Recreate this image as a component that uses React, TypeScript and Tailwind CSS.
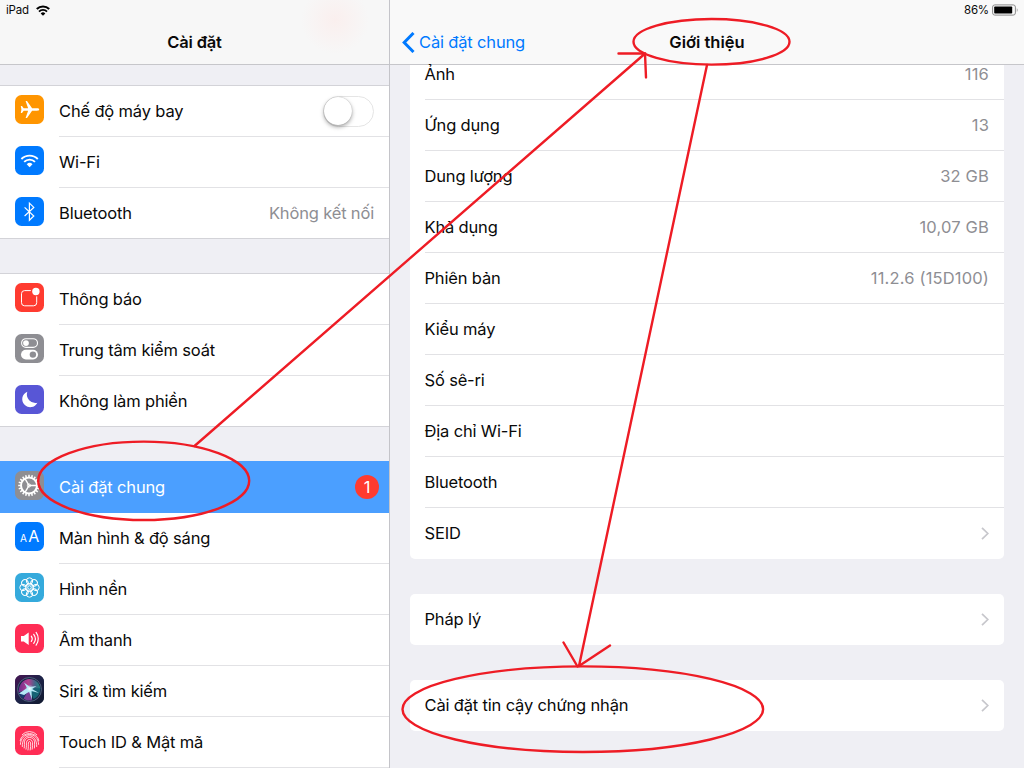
import type { ReactNode } from "react"

const SEPARATOR_CLASS = "border-b border-[#e2e2e5]"
const GROUP_EDGE_CLASS = "border-b border-[#d3d3d8]"

interface SidebarItem {
  id: string
  label: string
  iconClass: string
  icon: ReactNode
  value?: string
  toggle?: boolean
  badge?: number
  active?: boolean
}

interface AboutRow {
  label: string
  value?: string
  link?: boolean
}

const PlaneIcon = () => (
  <svg viewBox="0 0 29 29" className="size-full" fill="#fff">
    <path d="M24.2 14.5c0-.8-.9-1.2-2.100-1.200h-5L12 6h-1.400l2.500 7.300H8.700L7 10.900H5.800l.6 3.600-.6 3.600H7l1.700-2.400h4.400L10.600 23H12l5.100-7.300h5c1.200 0 2.100-.4 2.100-1.200z" />
  </svg>
)

const WifiIcon = () => (
  <svg viewBox="0 0 29 29" className="size-full" fill="none" stroke="#fff">
    <path d="M6.400 13a11.600 11.600 0 0 1 16.400 0" strokeWidth="1.900" />
    <path d="M9.200 15.900a7.600 7.600 0 0 1 10.800 0" strokeWidth="1.900" />
    <path d="M14.600 21.300l-2.900-3a4.100 4.100 0 0 1 5.800 0z" fill="#fff" stroke="none" />
  </svg>
)

const BluetoothIcon = () => (
  <svg viewBox="0 0 29 29" className="size-full" fill="none" stroke="#fff" strokeWidth="1.2">
    <path d="M9.600 10.400l9.200 8.600-4.400 4.300V6.100l4.400 4.300L9.600 19" />
  </svg>
)

const NotificationIcon = () => (
  <svg viewBox="0 0 29 29" className="size-full" fill="none">
    <path
      d="M15.800 7.600H9.600a3.100 3.100 0 0 0-3.100 3.100v9a3.100 3.100 0 0 0 3.100 3.100h9a3.100 3.100 0 0 0 3.100-3.100v-6.300"
      stroke="#fff"
      strokeWidth="1"
    />
    <circle cx="20.900" cy="8.500" r="3.700" fill="#fff" />
  </svg>
)

const ControlCenterIcon = () => (
  <svg viewBox="0 0 29 29" className="size-full" fill="none">
    <rect x="6.600" y="4.700" width="15.900" height="8.700" rx="4.350" stroke="#fff" strokeWidth="1.1" />
    <circle cx="11" cy="9.050" r="2.900" fill="#fff" />
    <rect x="6" y="15.700" width="17" height="9.800" rx="4.900" fill="#fff" />
    <circle cx="17.900" cy="20.600" r="3.200" fill="#8e8e93" />
  </svg>
)

const MoonIcon = () => (
  <svg viewBox="0 0 29 29" className="size-full" fill="#fff">
    <path d="M12.300 6.700a8.600 8.600 0 0 0 10.100 11A8 8 0 1 1 12.300 6.700z" />
  </svg>
)

const GEAR_TEETH = Array.from({ length: 20 }, (_, i) => i * 18)

const GearIcon = () => (
  <svg viewBox="0 0 29 29" className="size-full" fill="none" stroke="#fff">
    <circle cx="14" cy="14.500" r="8" strokeWidth="2" />
    {GEAR_TEETH.map((angle) => (
      <path key={angle} d="M14 3.700v2.400" strokeWidth="1.5" transform={`rotate(${angle} 14 14.500)`} />
    ))}
    {[90, 210, 330].map((angle) => (
      <path key={angle} d="M14 14.500V6.800" strokeWidth="1.4" transform={`rotate(${angle} 14 14.500)`} />
    ))}
    <circle cx="14" cy="14.500" r="1.600" strokeWidth="1" />
  </svg>
)

const DisplayIcon = () => (
  <span className="flex h-full items-baseline justify-center gap-[1.5px] pt-[3px] leading-[23px] text-white">
    <span className="text-[10px]">A</span>
    <span className="text-[16px]">A</span>
  </span>
)

const WallpaperIcon = () => (
  <svg viewBox="0 0 29 29" className="size-full" fill="none" stroke="#fff" strokeWidth="1">
    {[0, 45, 90, 135, 180, 225, 270, 315].map((angle) => (
      <circle key={angle} cx="14.500" cy="8" r="3.200" transform={`rotate(${angle} 14.500 14.500)`} />
    ))}
    <circle cx="14.500" cy="14.500" r="4" />
    <circle cx="14.500" cy="14.500" r="1.800" />
  </svg>
)

const SoundIcon = () => (
  <svg viewBox="0 0 29 29" className="size-full" fill="none" stroke="#fff" strokeLinecap="round">
    <path d="M6 12.100h2.800l4.900-3.500v12.400l-4.900-3.500H6z" fill="#fff" stroke="none" />
    <path d="M16.300 12.200a4.400 4.400 0 0 1 0 5.200" strokeWidth="1.2" />
    <path d="M18.700 10.300a7.400 7.400 0 0 1 0 9" strokeWidth="1.2" />
    <path d="M21.100 8.400a10.600 10.600 0 0 1 0 12.800" strokeWidth="1.2" />
  </svg>
)

const SiriIcon = () => (
  <svg viewBox="0 0 29 29" className="size-full" fill="none">
    <defs>
      <linearGradient id="siri-back" x1="0" y1="0" x2="1" y2="1">
        <stop offset="0" stopColor="#471453" />
        <stop offset=".5" stopColor="#1d2348" />
        <stop offset="1" stopColor="#10192d" />
      </linearGradient>
      <linearGradient id="siri-top" x1="0" y1="0" x2="1" y2="0">
        <stop offset="0" stopColor="#7c2f9a" />
        <stop offset=".45" stopColor="#d0449c" />
        <stop offset=".75" stopColor="#4d6f95" />
        <stop offset="1" stopColor="#1f9a8c" />
      </linearGradient>
      <radialGradient id="siri-glow">
        <stop offset="0" stopColor="#fff" />
        <stop offset="1" stopColor="#8be8f5" stopOpacity="0" />
      </radialGradient>
    </defs>
    <rect width="29" height="29" fill="url(#siri-back)" />
    <circle cx="14.500" cy="14.500" r="12" fill="#172545" stroke="#5c6f8a" strokeWidth=".8" />
    <path d="M3.500 17.500C3.800 9 8.500 4 14.500 4s10.300 4 10.800 9.500L15 13.500z" fill="url(#siri-top)" opacity=".85" />
    <path d="M14.500 13.500l10.800-.5c.3 5-2.300 9-6.800 11z" fill="#14727f" opacity=".8" />
    <path d="M14.500 13.500L8.500 23.500c2.500 1.900 5.500 2.400 8.500 1.700z" fill="#85409e" opacity=".9" />
    <path d="M14.500 13.500L3.800 18c.8 2.300 2.300 4.200 4.200 5.300z" fill="#1c3f7d" opacity=".8" />
    <path d="M4 18.500l8-5.500-3-5.500 6 4.500 6.500-1-4.500 3 7 4-7.500-2 .6 9-3-8.300-5 3.300z" fill="#b5e6f7" />
    <circle cx="14.500" cy="13.800" r="4.500" fill="url(#siri-glow)" />
  </svg>
)

const FingerprintIcon = () => (
  <svg viewBox="0 0 29 29" className="size-full" fill="none" stroke="#fff" strokeWidth=".8" strokeLinecap="round">
    <path d="M7.200 8.700a9.700 9.700 0 0 1 14.600 0" />
    <path d="M5.200 14.600c1.200-9.400 17.400-9.400 18.600 0" />
    <path d="M5.400 18.400c.2-13.200 18-13.200 18.200 0" />
    <path d="M7.300 20.600c-.6-14.500 15-14.500 14.400 0" />
    <path d="M9.200 22c.5-3 0-4.500.3-6.500 1-5.400 9-5.400 10 0 .3 2 .1 4.500-.1 6.500" />
    <path d="M11 23.200c.7-3 .3-4.800.5-6.800.6-3.900 5.400-3.900 6 0 .2 2 .1 4.800-.3 6.800" />
    <path d="M13 24c.6-2.800.2-5 .4-7.200.2-1.600 2-1.600 2.200 0 .2 2.500.1 5-.4 7.200" />
  </svg>
)

const SIDEBAR_GROUPS: SidebarItem[][] = [
  [
    { id: "airplane", label: "Chế độ máy bay", iconClass: "bg-[#ff9500]", icon: <PlaneIcon />, toggle: true },
    { id: "wifi", label: "Wi-Fi", iconClass: "bg-[#007aff]", icon: <WifiIcon /> },
    { id: "bluetooth", label: "Bluetooth", iconClass: "bg-[#007aff]", icon: <BluetoothIcon />, value: "Không kết nối" },
  ],
  [
    { id: "notifications", label: "Thông báo", iconClass: "bg-[#ff3b30]", icon: <NotificationIcon /> },
    { id: "control", label: "Trung tâm kiểm soát", iconClass: "bg-[#8e8e93]", icon: <ControlCenterIcon /> },
    { id: "dnd", label: "Không làm phiền", iconClass: "bg-[#5856d6]", icon: <MoonIcon /> },
  ],
  [
    { id: "general", label: "Cài đặt chung", iconClass: "bg-[#8e8e93]", icon: <GearIcon />, badge: 1, active: true },
    { id: "display", label: "Màn hình & độ sáng", iconClass: "bg-[#007aff]", icon: <DisplayIcon /> },
    { id: "wallpaper", label: "Hình nền", iconClass: "bg-[#35aadc]", icon: <WallpaperIcon /> },
    { id: "sounds", label: "Âm thanh", iconClass: "bg-[#ff2d55]", icon: <SoundIcon /> },
    { id: "siri", label: "Siri & tìm kiếm", iconClass: "bg-[#1a2040]", icon: <SiriIcon /> },
    { id: "touchid", label: "Touch ID & Mật mã", iconClass: "bg-[#ff2d55]", icon: <FingerprintIcon /> },
  ],
]

const ABOUT_GROUPS: AboutRow[][] = [
  [
    { label: "Ảnh", value: "116" },
    { label: "Ứng dụng", value: "13" },
    { label: "Dung lượng", value: "32 GB" },
    { label: "Khả dụng", value: "10,07 GB" },
    { label: "Phiên bản", value: "11.2.6 (15D100)" },
    { label: "Kiểu máy" },
    { label: "Số sê-ri" },
    { label: "Địa chỉ Wi-Fi" },
    { label: "Bluetooth" },
    { label: "SEID", link: true },
  ],
  [{ label: "Pháp lý", link: true }],
  [{ label: "Cài đặt tin cậy chứng nhận", link: true }],
]

const Toggle = () => (
  <span className="flex h-[31px] w-[51px] rounded-full border-[1.5px] border-[#e5e5e5] bg-white">
    <span className="size-7 rounded-full bg-white shadow-[0_2px_4px_rgba(0,0,0,0.35),0_0_1px_rgba(0,0,0,0.3)]" />
  </span>
)

const SidebarRow = ({ item, last }: { item: SidebarItem; last: boolean }) => {
  const edge = item.active ? "border-b border-[#4b9fff]" : last ? GROUP_EDGE_CLASS : SEPARATOR_CLASS
  return (
    <div className={`flex h-[51px] ${item.active ? "bg-[#4b9fff] text-white" : "bg-white"} ${last ? edge : ""}`}>
      <div className={`mx-[15px] mt-[9px] size-[29px] shrink-0 overflow-hidden rounded-[6.5px] ${item.iconClass}`}>
        {item.icon}
      </div>
      <div className={`flex flex-1 items-center justify-between ${last ? "" : edge}`}>
        <span>{item.label}</span>
        {item.toggle && <span className="mr-[15px]"><Toggle /></span>}
        {item.value && <span className="mr-[15px] text-[#8e8e93]">{item.value}</span>}
        {item.badge && (
          <span className="mr-2.5 flex size-6 items-center justify-center rounded-full bg-[#ff3b30]">{item.badge}</span>
        )}
      </div>
    </div>
  )
}

const Disclosure = () => (
  <svg viewBox="0 0 8 13" className="h-[13px] w-2" fill="none" stroke="#c7c7cc" strokeWidth="1.7">
    <path d="M1 .8l5.800 5.700L1 12.200" />
  </svg>
)

const Sidebar = () => (
  <aside className="flex w-[390px] shrink-0 flex-col border-r border-[#c4c4c9] bg-[#efeff4]">
    <header className="flex h-[65px] shrink-0 flex-col border-b border-[#c6c6ca] bg-[#f7f7f7] bg-[radial-gradient(circle_at_335px_20px,#faefee_0px,#f7f7f7_34px)]">
      <div className="flex h-5 items-center gap-[7px] pl-1.5 text-[11.5px]">
        <span className="pt-0.5">iPad</span>
        <svg viewBox="0 0 14 11" className="h-[11px] w-3.5" fill="none" stroke="#000">
          <path d="M.8 4a8.800 8.800 0 0 1 12.400 0" strokeWidth="2.100" />
          <path d="M3 6.600a5.600 5.600 0 0 1 8 0" strokeWidth="1.900" />
          <path d="M7 10.700L4.700 8.400a3.200 3.200 0 0 1 4.600 0z" fill="#000" stroke="none" />
        </svg>
      </div>
      <h1 className="flex h-11 items-center justify-center font-semibold">Cài đặt</h1>
    </header>
    <div className="flex flex-1 flex-col gap-[34px] overflow-hidden pt-5">
      {SIDEBAR_GROUPS.map((group, groupIndex) => (
        <div
          key={groupIndex}
          className={`shrink-0 border-t ${group[0].active ? "border-[#4b9fff]" : "border-[#d3d3d8]"}`}
        >
          {group.map((item, i) => (
            <SidebarRow key={item.id} item={item} last={groupIndex < 2 && i === group.length - 1} />
          ))}
        </div>
      ))}
    </div>
  </aside>
)

const AboutPanel = () => (
  <main className="flex flex-1 flex-col bg-[#efeff4]">
    <header className="relative z-10 flex h-[65px] shrink-0 flex-col border-b border-[#c6c6ca] bg-[#f9f9f9]">
      <div className="flex h-5 items-center justify-end gap-[3px] pr-[5px] text-[11.5px]">
        <span className="pt-0.5">86%</span>
        <svg viewBox="0 0 27 12" className="h-3 w-[27px]" fill="none">
          <rect x=".6" y=".9" width="22.800" height="10.200" rx="2.200" stroke="#8a8a8a" />
          <rect x="2.200" y="2.500" width="18" height="7" rx=".8" fill="#000" />
          <path d="M24.800 4.200c1 .5 1 3.100 0 3.600z" fill="#8a8a8a" />
        </svg>
      </div>
      <div className="grid h-11 grid-cols-[1fr_auto_1fr] items-center">
        <div className="flex items-center gap-1 pl-3 text-[#007aff]">
          <svg viewBox="0 0 13 21" className="h-[21px] w-[13px]" fill="none" stroke="#007aff" strokeWidth="3">
            <path d="M11.500 1L2.200 10.500l9.300 9.500" />
          </svg>
          <span>Cài đặt chung</span>
        </div>
        <h2 className="font-semibold tracking-[0]">Giới thiệu</h2>
      </div>
    </header>
    {/* The list is scrolled, so its first row runs under the translucent header */}
    <div className="-mt-4 flex flex-col gap-[35px] pl-[19.5px] pr-5">
      {ABOUT_GROUPS.map((group, groupIndex) => (
        <div key={groupIndex} className="rounded-[5px] bg-white pl-[15px]">
          {group.map((row, i) => (
            <div
              key={row.label}
              className={`flex h-[51px] items-center justify-between pr-[15px] ${i < group.length - 1 ? SEPARATOR_CLASS : ""}`}
            >
              <span className="relative z-20">{row.label}</span>
              {row.value && <span className="tracking-[0.01em] text-[#8e8e93]">{row.value}</span>}
              {row.link && <Disclosure />}
            </div>
          ))}
        </div>
      ))}
    </div>
  </main>
)

// Hand-drawn walkthrough marks that lie over both panels
const Annotations = () => (
  <svg
    viewBox="0 0 1024 768"
    className="pointer-events-none absolute inset-0 z-30 h-[768px] w-[1024px]"
    fill="none"
    stroke="#ee1c25"
    strokeWidth="2.4"
    strokeLinecap="round"
  >
    <ellipse cx="143.700" cy="480.800" rx="105.500" ry="39.200" />
    <path d="M194.500 446L644.500 54M618.500 53.500H645L646 77.500" />
    <ellipse cx="711.500" cy="41.800" rx="78" ry="22.800" />
    <path d="M707 65L579 666M563.500 642.500L577.500 666.500M610 645.500L579 666" />
    <ellipse cx="582.800" cy="709.200" rx="180.300" ry="42.800" />
  </svg>
)

const App = () => (
  <div className="relative flex h-[768px] w-[1024px] overflow-hidden font-['Inter','Liberation_Sans',sans-serif] text-[16.5px] tracking-[-0.01em] text-[#0a0a0a]">
    <Sidebar />
    <AboutPanel />
    <Annotations />
  </div>
)

export default App
